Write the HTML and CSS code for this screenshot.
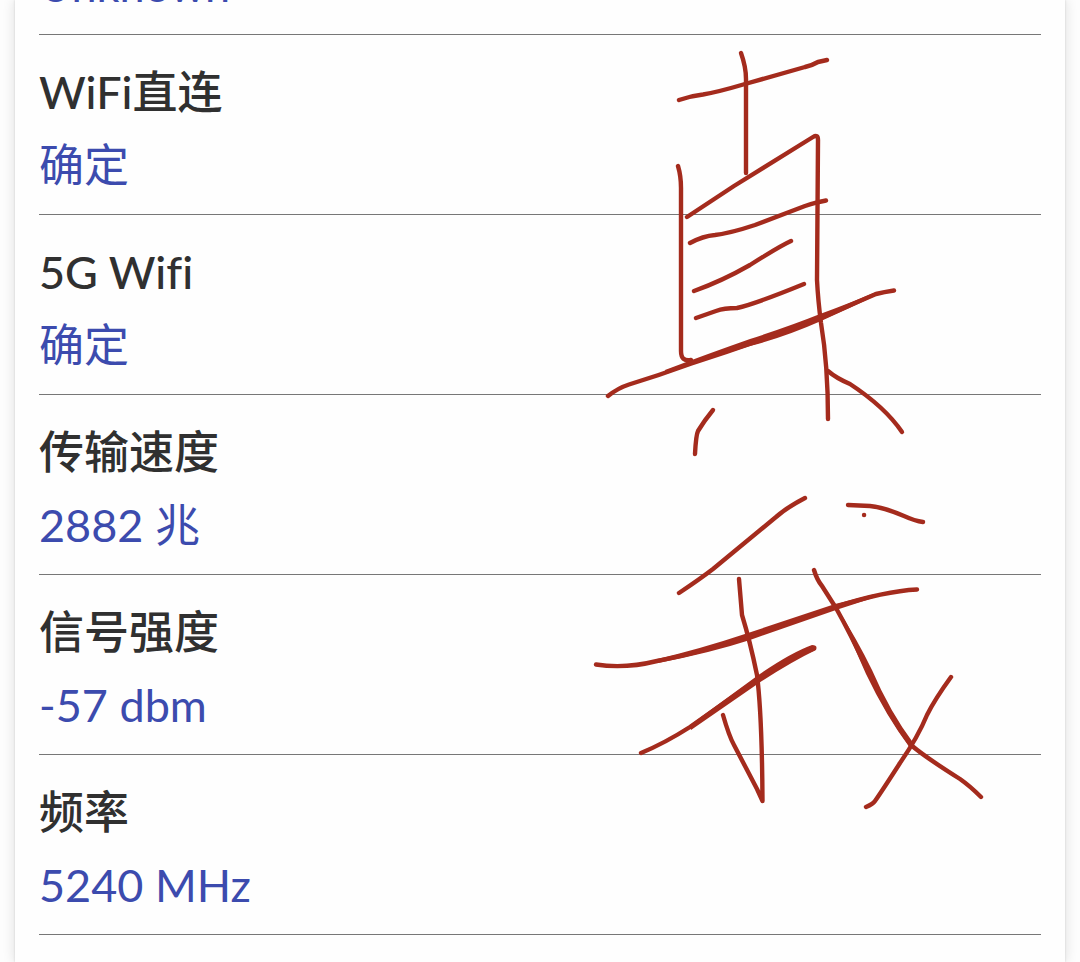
FILE: index.html
```html
<!DOCTYPE html>
<html lang="zh-CN">
<head>
<meta charset="utf-8">
<meta name="viewport" content="width=device-width, initial-scale=1">
<title>WiFi</title>
<link rel="stylesheet" href="styles.css">
</head>
<body>
<main class="card">
  <dl class="info">
    <div class="row row-clipped"><dd class="value">Unknown</dd></div>
    <div class="row"><dt class="label">WiFi直连</dt><dd class="value">确定</dd></div>
    <div class="row"><dt class="label">5G Wifi</dt><dd class="value">确定</dd></div>
    <div class="row"><dt class="label">传输速度</dt><dd class="value">2882 兆</dd></div>
    <div class="row"><dt class="label">信号强度</dt><dd class="value">-57 dbm</dd></div>
    <div class="row"><dt class="label">频率</dt><dd class="value">5240 MHz</dd></div>
  </dl>
</main>
<svg class="ink" viewBox="580 40 420 780" width="420" height="780" aria-hidden="true">
  <g class="stroke">
    <path d="M679 100Q690 96 703 94.500Q718 92 745 84L805 67Q813 65 818 62L827 60"/>
    <path d="M741 53Q746 67 746 79V173"/>
    <path d="M678 166Q681 176 681 188V351Q681 362 691 360"/>
    <path d="M687 217L734 186L813 137Q818 134 818 140L817 280Q818 300 821 323Q828 365 828 419"/>
    <path d="M690 243Q703 236 715 235Q731 233 755 225L805 206Q817 202 826 200.500"/>
    <path d="M694 291Q722 281 750 265Q780 246 791 241"/>
    <path d="M696 318L716 311Q724 308 737 308Q755 304 804 284"/>
    <path d="M608 396Q618 388 629 384.500Q660 375 690 364Q760 341 821 318Q855 303 876 294Q884 292 894 290.500"/>
    <path d="M828 371Q836 378 850 384Q885 407 902 432"/>
    <path d="M713 410Q704 421 698 431Q696 435 695 454"/>
    <path d="M679 593Q700 579 713 569L776 517Q786 508 805 498"/>
    <path d="M848 505L870 506Q883 507 904 516Q915 521 923 522"/>
    <path d="M864 515h.1"/>
    <path d="M739 579L742 615Q750 641 757 675Q762 715 762.500 801L757 789L734 745Q729 736 723 715"/>
    <path d="M596 664.500Q625 669 657 661Q690 655 749 637L835 607Q885 591 917 589.500"/>
    <path d="M641 753Q665 743 690 727L758 679Q795 655 813 649"/>
    <path d="M814 570Q817 580 822 586L836 608Q850 633 867 669Q888 714 911 745Q925 757 960 779Q970 786 981 797"/>
    <path d="M951 677Q935 699 927 715Q918 737 900 763Q882 791 875 801Q873 804 866 807"/>
  </g>
  <g class="pressure">
    <path d="M665 370Q710 353 750 339Q790 326 820 314Q850 303 876 292L877 295Q850 308 821 321Q785 337 750 346Q710 358 666 374Z"/>
    <path d="M657 659Q700 649 748 633L835 604L875 594L876 597L836 610L750 640Q710 653 658 663Z"/>
    <path d="M690 725L757 676Q790 653 812 645Q818 645 816 650Q791 662 759 683L691 730Z"/>
    <path d="M836 606Q858 641 872 670Q890 712 914 744L910 748Q886 716 866 674Z"/>
  </g>
</svg>
</body>
</html>
```
FILE: styles.css
```css
* {
  box-sizing: border-box;
}

body {
  margin: 0;
  position: relative;
  background: #fdfdfd;
  font-family: Lato, "Noto Sans CJK SC", sans-serif;
  font-size: 45px;
  line-height: 60px;
  font-variant-ligatures: none;
}

.card {
  min-height: 100vh;
  margin: 0 15px;
  padding: 0 24px 24px;
  background: #fefefe;
  box-shadow: 0 0 2px #cfcfcf, 0 0 12px #dcdcdc;
}

.info {
  margin: 0;
}

.row {
  display: flex;
  flex-direction: column;
  gap: 13px;
  padding: 27px 0 19px;
  border-bottom: 1px solid #777;
}

.row-clipped {
  height: 35px;
  padding: 0 0 19px;
  justify-content: flex-end;
  overflow: hidden;
}

.label {
  color: #303030;
  font-weight: 500;
}

.value {
  margin: 0;
  color: #3c4bae;
}

.ink {
  position: absolute;
  top: 40px;
  right: 80px;
  pointer-events: none;
}

.stroke {
  fill: none;
  stroke: #a42b1d;
  stroke-width: 4.4;
  stroke-linecap: round;
  stroke-linejoin: round;
}

.pressure {
  fill: #a42b1d;
}
```
